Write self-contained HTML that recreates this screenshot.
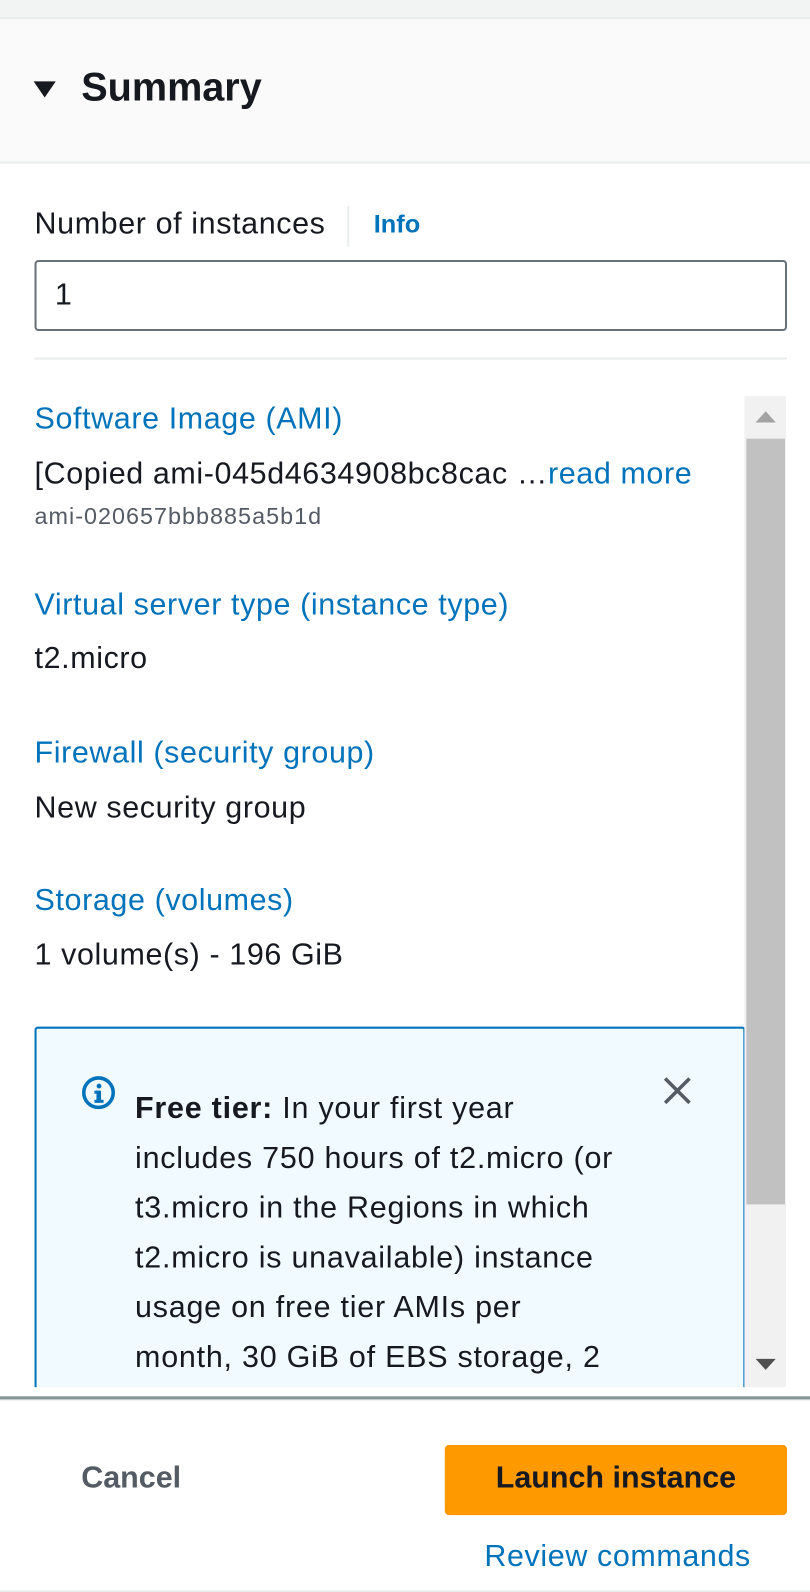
<!DOCTYPE html>
<html><head><meta charset="utf-8"><style>
*{margin:0;padding:0;box-sizing:border-box}
html,body{width:810px;height:1592px;overflow:hidden}
body{background:#fff;font-family:"Liberation Sans",Arial,sans-serif;color:#16191f;position:relative}
#w{position:absolute;left:0;top:0;width:800px;height:1570px;transform:scale(1.0155);transform-origin:0 0}
.a{position:absolute;white-space:nowrap;line-height:1}
.blue{color:#0073bb}
.t{font-size:30px;letter-spacing:0.6px}
</style></head><body><div id="w">
<div class="a" style="left:0;top:0;width:800px;height:19px;background:#f2f3f3;border-bottom:2px solid #eaeded"></div>
<div class="a" style="left:0;top:20px;width:800px;height:141px;background:#fafafa;border-bottom:2px solid #eaeded"></div>
<svg class="a" style="left:33px;top:80px" width="22" height="16"><polygon points="0,0 22,0 11,16" fill="#16191f"/></svg>
<div class="a" style="left:80px;top:67px;font-size:39px;font-weight:bold">Summary</div>

<div class="a t" style="left:34px;top:206px">Number of instances</div>
<div class="a" style="left:342px;top:203px;width:2px;height:40px;background:#eaeded"></div>
<div class="a blue" style="left:368px;top:209px;font-size:25px;font-weight:bold">Info</div>
<div class="a" style="left:34px;top:256px;width:741px;height:70px;border:2px solid #687078;border-radius:4px"></div>
<div class="a t" style="left:54px;top:276px">1</div>
<div class="a" style="left:34px;top:352px;width:741px;height:2px;background:#eaeded"></div>

<div class="a t blue" style="left:34px;top:398px">Software Image (AMI)</div>
<div class="a t" style="left:34px;top:452px">[Copied ami-045d4634908bc8cac …<span class="blue">read more</span></div>
<div class="a" style="left:34px;top:497px;font-size:23px;letter-spacing:1px;color:#545b64">ami-020657bbb885a5b1d</div>
<div class="a t blue" style="left:34px;top:581px">Virtual server type (instance type)</div>
<div class="a t" style="left:34px;top:634px">t2.micro</div>
<div class="a t blue" style="left:34px;top:727px">Firewall (security group)</div>
<div class="a t" style="left:34px;top:781px">New security group</div>
<div class="a t blue" style="left:34px;top:872px">Storage (volumes)</div>
<div class="a t" style="left:34px;top:926px">1 volume(s) - 196 GiB</div>

<div class="a" style="left:34px;top:1011px;width:700px;height:380px;border:2px solid #0073bb;border-radius:3px;background:#f1faff"></div>
<svg class="a" style="left:80px;top:1059px" width="34" height="34"><circle cx="17" cy="17" r="14.5" fill="none" stroke="#0073bb" stroke-width="3.5"/><rect x="15" y="15" width="4.5" height="10" fill="#0073bb"/><rect x="13" y="24" width="9" height="3" fill="#0073bb"/><rect x="13" y="15" width="5" height="3" fill="#0073bb"/><circle cx="17.5" cy="10.5" r="2.4" fill="#0073bb"/></svg>
<svg class="a" style="left:652px;top:1059px" width="30" height="30"><path d="M3 3L27 27M27 3L3 27" stroke="#545b64" stroke-width="3.5"/></svg>
<div class="a t" style="left:133px;top:1067px;line-height:49px;white-space:nowrap;letter-spacing:0.75px"><b>Free tier:</b> In your first year<br>includes 750 hours of t2.micro (or<br>t3.micro in the Regions in which<br>t2.micro is unavailable) instance<br>usage on free tier AMIs per<br>month, 30 GiB of EBS storage, 2<br>million IOs, 1 GB of snapshots</div>

<div class="a" style="left:733px;top:390px;width:41px;height:976px;background:#f1f1f1"></div>
<div class="a" style="left:735px;top:432px;width:38px;height:754px;background:#c1c1c1"></div>
<svg class="a" style="left:744px;top:405px" width="20" height="12"><polygon points="10,0 20,11 0,11" fill="#a3a3a3"/></svg>
<svg class="a" style="left:744px;top:1338px" width="20" height="12"><polygon points="0,0 20,0 10,11" fill="#505050"/></svg>

<div class="a" style="left:0;top:1366px;width:800px;height:226px;background:#fff"></div>
<div class="a" style="left:0;top:1375px;width:800px;height:3px;background:#879596"></div>
<div class="a" style="left:0;top:1378px;width:800px;height:1px;background:#d5dbdb"></div>
<div class="a" style="left:80px;top:1441px;font-size:30px;font-weight:bold;color:#545b64">Cancel</div>
<div class="a" style="left:438px;top:1423px;width:337px;height:69px;background:#ff9900;border-radius:4px"></div>
<div class="a" style="left:438px;top:1441px;width:337px;text-align:center;font-size:30px;font-weight:bold;color:#16191f">Launch instance</div>
<div class="a t blue" style="left:477px;top:1518px">Review commands</div>
<div class="a" style="left:0;top:1566px;width:800px;height:3px;background:#eaeded"></div>
</div></body></html>
